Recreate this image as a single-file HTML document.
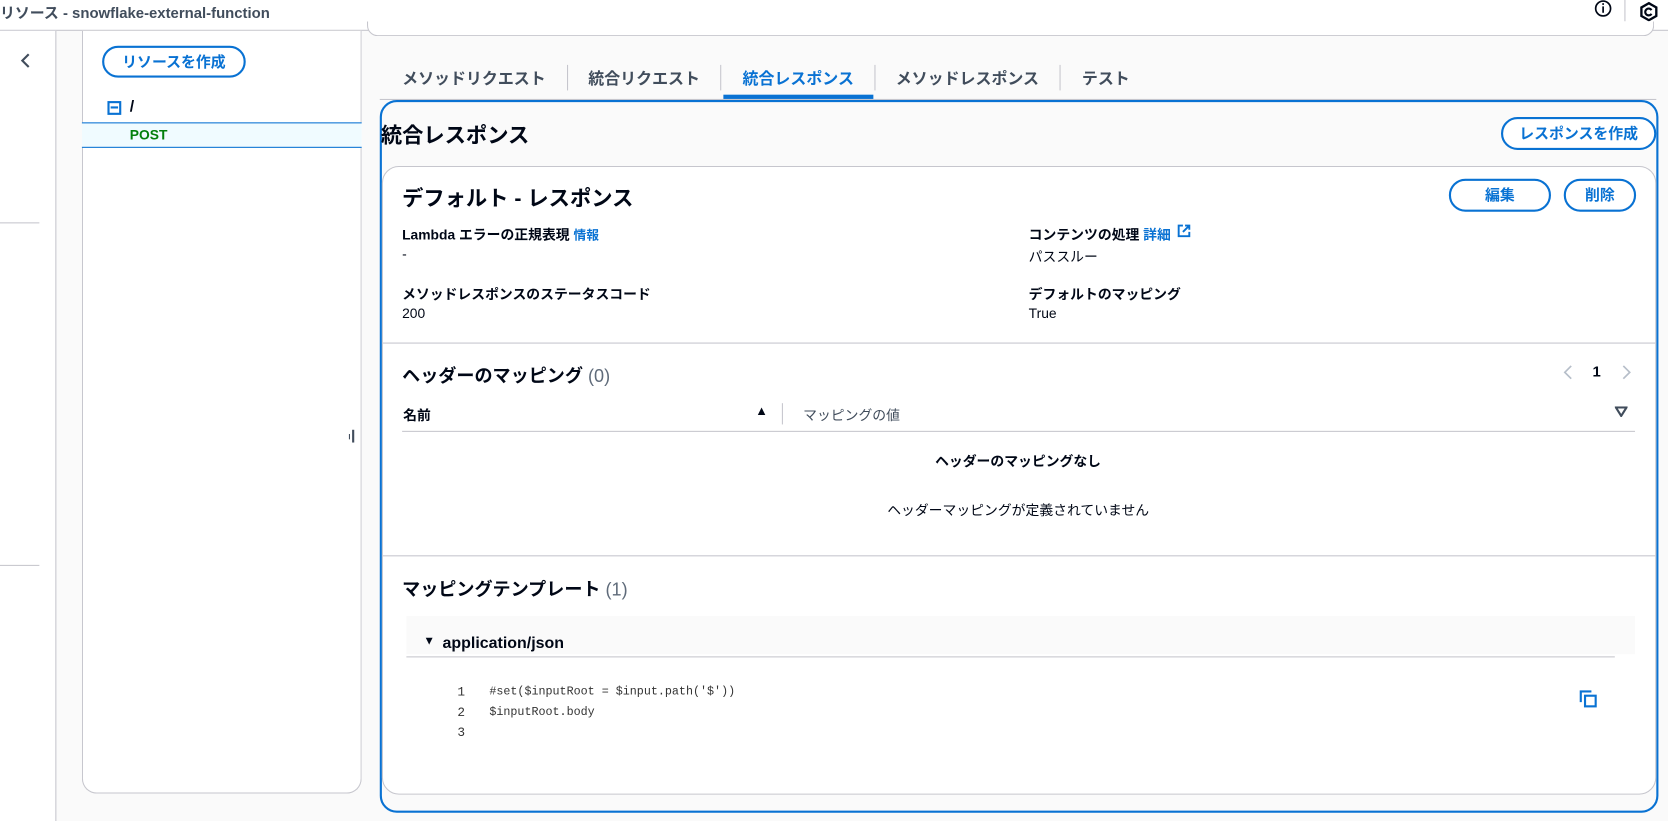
<!DOCTYPE html>
<html><head><meta charset="utf-8"><style>
*{box-sizing:border-box;margin:0;padding:0}
html,body{width:1668px;height:821px;overflow:hidden;background:#fafafa}
#w{position:absolute;left:0;top:0;width:1568px;height:772px;transform:scale(1.06378);transform-origin:0 0;font-family:"Liberation Sans","Noto Sans CJK JP",sans-serif;color:#000716;font-size:14px}
.a{position:absolute;white-space:nowrap}
.b{font-weight:bold}
.btn{position:absolute;border:2px solid #0972d3;border-radius:20px;color:#0972d3;font-weight:bold;background:#fff;text-align:center;font-size:14px}
.hl{position:absolute;height:1px;background:#c6c6cd}
.blue{color:#0972d3}
.mono{font-family:"Liberation Mono","DejaVu Sans Mono",monospace;font-size:11px;color:#333}
</style></head><body><div id="w">
<div class="a" style="left:0;top:0;width:1568px;height:29px;background:#fff;border-bottom:1px solid #c6c6cd"></div>
<div class="a" style="left:0;top:2px;font-size:14px;color:#414d5c;font-weight:bold">リソース - snowflake-external-function</div>
<svg class="a" style="left:1497px;top:0" width="20" height="20"><circle cx="10" cy="8" r="7" fill="none" stroke="#000716" stroke-width="1.6"/><rect x="9.2" y="6" width="1.6" height="6" fill="#000716"/><rect x="9.2" y="3" width="1.6" height="1.6" fill="#000716"/></svg>
<div class="a" style="left:1527px;top:0;width:1px;height:22px;background:#c6c6cd"></div>
<svg class="a" style="left:1540px;top:1px" width="20" height="20"><path d="M10 2 L17 6 V14 L10 18 L3 14 V6 Z" fill="none" stroke="#000716" stroke-width="2.2"/><path d="M12.5 8.5 A3.2 3.2 0 1 0 12.5 12" fill="none" stroke="#000716" stroke-width="2"/></svg>
<div class="a" style="left:0;top:29px;width:53px;height:743px;background:#fff;border-right:1px solid #c6c6cd"></div>
<svg class="a" style="left:17px;top:49px" width="14" height="16"><path d="M10 2 L4 8 L10 14" fill="none" stroke="#414d5c" stroke-width="2"/></svg>
<div class="hl" style="left:0;top:209px;width:37px"></div>
<div class="hl" style="left:0;top:531px;width:37px"></div>
<div class="a" style="left:77px;top:29px;width:263px;height:717px;background:#fff;border:1px solid #c6c6cd;border-top:none;border-radius:0 0 14px 14px"></div>
<div class="btn" style="left:96px;top:43px;width:135px;height:30px;line-height:26px">リソースを作成</div>
<div class="a" style="left:101px;top:95px;width:13px;height:13px;border:2px solid #0972d3"></div>
<div class="a" style="left:104px;top:100px;width:7px;height:2px;background:#0972d3"></div>
<div class="a b" style="left:122px;top:92px;font-size:15px">/</div>
<div class="a" style="left:77px;top:115px;width:263px;height:24px;background:#f0fbff;border-top:1px solid #0972d3;border-bottom:1px solid #0972d3"></div>
<div class="a b" style="left:122px;top:119px;font-size:13px;color:#037f0c">POST</div>
<div class="a" style="left:331px;top:404px;width:2px;height:12px;background:#414d5c"></div>
<div class="a" style="left:328px;top:408px;width:1px;height:5px;background:#414d5c"></div>
<div class="a" style="left:345px;top:20px;width:1210px;height:14px;border:1px solid #c6c6cd;border-top:none;border-radius:0 0 10px 10px;background:#fff"></div>
<div class="a b" style="left:378px;top:63px;font-size:15px;color:#414d5c">メソッドリクエスト</div>
<div class="a" style="left:533px;top:61px;width:1px;height:24px;background:#c6c6cd"></div>
<div class="a b" style="left:553px;top:63px;font-size:15px;color:#414d5c">統合リクエスト</div>
<div class="a" style="left:677px;top:61px;width:1px;height:24px;background:#c6c6cd"></div>
<div class="a b" style="left:698px;top:63px;font-size:15px;color:#0972d3">統合レスポンス</div>
<div class="a" style="left:822px;top:61px;width:1px;height:24px;background:#c6c6cd"></div>
<div class="a b" style="left:842px;top:63px;font-size:15px;color:#414d5c">メソッドレスポンス</div>
<div class="a" style="left:996px;top:61px;width:1px;height:24px;background:#c6c6cd"></div>
<div class="a b" style="left:1017px;top:63px;font-size:15px;color:#414d5c">テスト</div>
<div class="hl" style="left:357px;top:93px;width:1200px"></div>
<div class="a" style="left:680px;top:89px;width:141px;height:4px;background:#0972d3"></div>
<div class="a" style="left:357px;top:94px;width:1202px;height:670px;border:2px solid #0972d3;border-radius:16px"></div>
<div class="a b" style="left:358px;top:111px;font-size:20px">統合レスポンス</div>
<div class="btn" style="left:1411px;top:110px;width:146px;height:31px;line-height:27px">レスポンスを作成</div>
<div class="a" style="left:359px;top:156px;width:1198px;height:591px;background:#fff;border:1px solid #c6c6cd;border-radius:16px"></div>
<div class="a b" style="left:378px;top:170px;font-size:20px">デフォルト - レスポンス</div>
<div class="btn" style="left:1362px;top:168px;width:96px;height:31px;line-height:27px">編集</div>
<div class="btn" style="left:1470px;top:168px;width:68px;height:31px;line-height:27px">削除</div>
<div class="a b" style="left:378px;top:210px;font-size:13px">Lambda エラーの正規表現 <span class="blue" style="font-size:12px">情報</span></div>
<div class="a" style="left:378px;top:231px;font-size:13px">-</div>
<div class="a b" style="left:378px;top:266px;font-size:13px">メソッドレスポンスのステータスコード</div>
<div class="a" style="left:378px;top:287px;font-size:13px">200</div>
<div class="a b" style="left:967px;top:210px;font-size:13px">コンテンツの処理 <span class="blue">詳細</span></div>
<svg class="a" style="left:1106px;top:210px" width="14" height="14"><path d="M6 2 H2 V12 H12 V8 M8 2 H12 V6 M12 2 L6 8" fill="none" stroke="#0972d3" stroke-width="1.8"/></svg>
<div class="a" style="left:967px;top:231px;font-size:13px">パススルー</div>
<div class="a b" style="left:967px;top:266px;font-size:13px">デフォルトのマッピング</div>
<div class="a" style="left:967px;top:287px;font-size:13px">True</div>
<div class="hl" style="left:360px;top:322px;width:1196px"></div>
<div class="a b" style="left:378px;top:339px;font-size:17px">ヘッダーのマッピング <span style="font-weight:normal;color:#5f6b7a">(0)</span></div>
<svg class="a" style="left:1466px;top:340px" width="80" height="20"><path d="M11 4 L5 10 L11 16" fill="none" stroke="#b6bec9" stroke-width="1.6"/><path d="M60 4 L66 10 L60 16" fill="none" stroke="#b6bec9" stroke-width="1.6"/></svg>
<div class="a b" style="left:1497px;top:341px;font-size:14px">1</div>
<div class="a b" style="left:379px;top:380px;font-size:13px">名前</div>
<div class="a" style="left:710px;top:379px;font-size:12px">▲</div>
<div class="a" style="left:735px;top:379px;width:1px;height:20px;background:#c6c6cd"></div>
<div class="a" style="left:755px;top:380px;font-size:13px;color:#414d5c">マッピングの値</div>
<svg class="a" style="left:1518px;top:382px" width="12" height="10"><path d="M1 1 H11 L6 9 Z" fill="none" stroke="#414d5c" stroke-width="2"/></svg>
<div class="hl" style="left:378px;top:405px;width:1159px"></div>
<div class="a b" style="left:879px;top:423px;font-size:13px">ヘッダーのマッピングなし</div>
<div class="a" style="left:834px;top:469px;font-size:13px">ヘッダーマッピングが定義されていません</div>
<div class="hl" style="left:360px;top:522px;width:1196px"></div>
<div class="a b" style="left:378px;top:540px;font-size:17px">マッピングテンプレート <span style="font-weight:normal;color:#5f6b7a">(1)</span></div>
<div class="a" style="left:382px;top:579px;width:1155px;height:36px;background:#fafafa"></div>
<div class="a" style="left:398px;top:597px;font-size:11px">▼</div>
<div class="a b" style="left:416px;top:596px;font-size:15px">application/json</div>
<div class="hl" style="left:382px;top:617px;width:1136px"></div>
<div class="a mono" style="left:430px;top:642px;line-height:19px;font-size:12px">1<br>2<br>3</div>
<div class="a mono" style="left:460px;top:642px;line-height:19px">#set($inputRoot = $input.path('$'))<br>$inputRoot.body</div>
<svg class="a" style="left:1484px;top:648px" width="18" height="18"><path d="M2 12 V2 H12" fill="none" stroke="#0972d3" stroke-width="2"/><rect x="6" y="6" width="10" height="10" fill="none" stroke="#0972d3" stroke-width="2"/></svg>
</div></body></html>
